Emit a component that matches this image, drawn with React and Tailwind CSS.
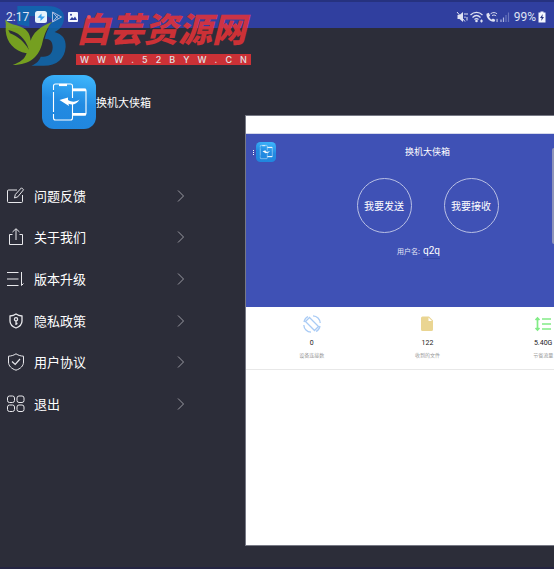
import React from 'react';

function PhonesIcon({ className }) {
  return (
    <svg viewBox="0 0 54 54" className={className} aria-hidden="true">
      <defs>
        <linearGradient id="tile" x1="0.6" y1="0" x2="0.4" y2="1">
          <stop offset="0" stopColor="#3cb4fb" />
          <stop offset="0.5" stopColor="#228be2" />
          <stop offset="1" stopColor="#2086de" />
        </linearGradient>
      </defs>
      <rect width="54" height="54" rx="12" fill="url(#tile)" />
      <g fill="none" stroke="#fff" strokeWidth="1.1">
        <path d="M11.500 15V11a2 2 0 0 1 2-2H28.500a2 2 0 0 1 2 2V23M11.500 17V37M11.500 39V43a2 2 0 0 0 2 2H28.500a2 2 0 0 0 2-2V29" />
        <path d="M30.500 14H42.500a1.500 1.500 0 0 1 1.500 1.500V38.500a1.500 1.500 0 0 1-1.500 1.500H30.500" />
        <path d="M31 15H44M31 39.300H44" strokeWidth="2.400" />
        <path d="M17 10H25" strokeWidth="2.200" />
      </g>
      <path d="M17.500 25L26 22.500V25C30 27.500 34 27 37.500 24.500C35 29 30.500 30.500 26.500 28.800L27 31Z" fill="#fff" />
    </svg>
  );
}

const stroke = { fill: 'none', stroke: 'currentColor', strokeWidth: 1 };

const icons = {
  feedback: (
    <g {...stroke}>
      <path d="M10 3H1.500a1 1 0 0 0-1 1V14.500a1 1 0 0 0 1 1H14.500a1 1 0 0 0 1-1V8" />
      <path d="M7.500 11L8.300 7.500L14.500 0.800L16.500 2.800L10.800 9.800Z" />
    </g>
  ),
  about: (
    <g {...stroke}>
      <path d="M5.500 6.500H2.500V16.500H15.500V6.500H12.500M9 12V1M5.500 4L9 0.700L12.500 4" />
    </g>
  ),
  upgrade: (
    <g {...stroke}>
      <path d="M0 2.500H11.500M0 9H11.500M0 15.500H11.500M14.500 2V15.500L16.500 13.500" />
    </g>
  ),
  privacy: (
    <g {...stroke} strokeWidth="1.300">
      <path d="M9 2C7 3.500 5 3.900 3 4V9C3 12.500 5.500 14.700 9 16C12.500 14.700 15 12.500 15 9V4C13 3.900 11 3.500 9 2Z" />
      <circle cx="9" cy="7.300" r="1.600" />
      <path d="M9 9V13M9 11.500H10.500" />
    </g>
  ),
  terms: (
    <g {...stroke}>
      <path d="M9 0.800C6.500 2.500 4 3 1.500 3.200V9C1.500 13 4.500 15.700 9 17.200C13.500 15.700 16.500 13 16.500 9V3.200C14 3 11.500 2.500 9 0.800Z" />
      <path d="M5 8.500L8.200 11.500L13 6" strokeWidth="1.200" />
    </g>
  ),
  exit: (
    <g {...stroke}>
      <rect x="0.500" y="1" width="7" height="6.500" rx="2" />
      <rect x="10" y="1" width="7" height="6.500" rx="2" />
      <rect x="0.500" y="10" width="7" height="6.500" rx="2" />
      <rect x="10" y="10" width="7" height="6.500" rx="2" />
    </g>
  ),
};

const menu = [
  ['feedback', '问题反馈'],
  ['about', '关于我们'],
  ['upgrade', '版本升级'],
  ['privacy', '隐私政策'],
  ['terms', '用户协议'],
  ['exit', '退出'],
];

function StatusBar() {
  return (
    <header className="h-7 shrink-0 border-t-2 border-[#26327f] bg-[#303f9f] pt-[5px] pr-2 pl-1.5 font-[Roboto,sans-serif] text-[12px] leading-5 text-[#dfe2f2]">
      <div className="relative z-10 flex items-center justify-between">
        <div className="flex items-center gap-1">
          <span className="mr-0.5">2:17</span>
          <svg viewBox="0 0 12 12" className="h-3 w-3">
            <rect width="12" height="12" rx="2.500" fill="#e6f2fb" />
            <path d="M2.500 6.500L6.500 2.500V5.500H10L5.500 10V7Z" fill="#3aa0ee" />
          </svg>
          <svg viewBox="0 0 12 12" className="h-3 w-3" fill="none" stroke="#a9bbe0">
            <path d="M1.500 1L10.500 6L1.500 11ZM1.500 1L7.500 8M1.500 11L7.500 4" />
          </svg>
          <svg viewBox="0 0 12 12" className="h-3 w-3">
            <rect x="1" y="1" width="10" height="10" rx="1" fill="#f4f7ff" />
            <path d="M2.500 9L5 6L6.500 7.500L8 5.500L10 9Z" fill="#303f9f" />
            <circle cx="4" cy="3.800" r="1" fill="#303f9f" />
          </svg>
          <span className="ml-1 h-1 w-1 rounded-full bg-[#e8505c]" />
        </div>
        <div className="flex items-center gap-0.5">
          <svg viewBox="0 0 12 12" className="h-3 w-3">
            <path d="M1.500 4H3.500L7 1V11L3.500 8H1.500Z" fill="currentColor" />
            <path d="M1 1L9 10.500M9 2V4M9 5.500V7M11 2V4M11 6V9.500" stroke="currentColor" fill="none" />
          </svg>
          <svg viewBox="0 0 14 12" className="h-3 w-3.5" fill="none" stroke="currentColor" strokeWidth="1.200">
            <path d="M0.500 4C4 0.500 9 0.500 12.500 4M2.500 6.500C5 4 8 4 10.500 6.500M4.500 8.500C6 7.200 7 7.200 8.500 8.500M10 10H13M11.500 8.500V11.500" />
            <circle cx="6.500" cy="10" r="0.700" />
          </svg>
          <svg viewBox="0 0 13 12" className="h-3 w-3">
            <path d="M0.500 2.500L3 1.500L4.500 4.500L3.300 5.700C4 7.300 5 8.200 6.300 8.800L7.500 7.500L10 9L9.500 11C5 12 0 7.500 0.500 2.500Z" fill="currentColor" />
            <path d="M5 2.500C7.500 0.500 10 1 12 2.500M6.500 4.500C8 3.500 9.500 3.700 11 4.800M12 8V11.500" fill="none" stroke="currentColor" />
          </svg>
          <svg viewBox="0 0 10 12" className="mr-0.5 h-3 w-2.5" fill="none" strokeWidth="1.200">
            <path d="M1 8.500V11M3.500 6.500V11" stroke="#aab2de" />
            <path d="M6 4V11M8.500 1.500V11" stroke="#6874bd" />
          </svg>
          <span>99%</span>
          <svg viewBox="0 0 8 12" className="h-3 w-2">
            <path d="M2.500 0.500H5.500V1.500H7.500V11.500H0.500V1.500H2.500Z" fill="#f4f7ff" />
            <path d="M4.800 3L2 7H3.700L3.200 10L6 6H4.300Z" fill="#26327f" />
          </svg>
        </div>
      </div>
    </header>
  );
}

function Sidebar() {
  return (
    <aside className="w-[245px] shrink-0 text-white">
      <div className="flex items-center pt-[47px] pl-[42px]">
        <PhonesIcon className="h-[54px] w-[54px]" />
        <h1 className="text-[11px] leading-4">换机大侠箱</h1>
      </div>
      <nav className="mt-[46px] mr-[60px] ml-[7px]">
        <ul className="grid h-[250px] grid-rows-6">
          {menu.map(([key, label]) => (
            <li key={key}>
              <button type="button" className="flex h-full w-full items-center text-left text-[13px] leading-5">
                <svg viewBox="0 0 18 18" className="mr-[9px] h-[18px] w-[18px] text-[#e8e8ec]">
                  {icons[key]}
                </svg>
                <span className="flex-1">{label}</span>
                <svg viewBox="0 0 8 12" className="h-3 w-2" fill="none" stroke="#9a9ba3">
                  <path d="M1 0.500L6.500 6L1 11.500" />
                </svg>
              </button>
            </li>
          ))}
        </ul>
      </nav>
    </aside>
  );
}

const stats = [
  [
    '0',
    '设备连接数',
    <g key="a" fill="none" stroke="#a9cbf5" strokeWidth="1.300">
      <path d="M6.500 2.500L15.500 11.500L11.500 15.500L2.500 6.500Z" />
      <path d="M10 0.800C14 1 17 4 17.200 8M8 17.200C4 17 1 14 0.800 10M1 7C1.500 4.500 3 2.500 5 1.500M17 11C16.500 13.500 15 15.500 13 16.500" />
    </g>,
  ],
  [
    '122',
    '收到的文件',
    <g key="b">
      <path d="M4.500 1.500H11L15 5.500V14.500A1.500 1.500 0 0 1 13.500 16H4.500A1.500 1.500 0 0 1 3 14.500V3A1.500 1.500 0 0 1 4.500 1.500Z" fill="#ead592" />
      <path d="M10.500 2.500V6H14Z" fill="#fff" />
    </g>,
  ],
  [
    '5.40G',
    '节省流量',
    <g key="c" fill="none" stroke="#82ec86" strokeWidth="1.700">
      <path d="M3.500 3V15M1.500 5L3.500 3L5.500 5M1.500 13L3.500 15L5.500 13M8 4H17M8 9H17M8 14H17" />
    </g>,
  ],
];

function Panel() {
  return (
    <main className="relative mt-[87px] h-[431px] min-w-0 flex-1 overflow-hidden border-y border-l border-[#777985] bg-white">
      <div className="w-[363px]">
        <div className="h-[18px] border-b border-[#d5d8ea]" />
        <section className="h-[173px] bg-[#3f51b5] pt-2 text-white">
          <div className="grid grid-cols-3 items-center">
            <div className="flex items-center pl-[7px]">
              <button type="button" aria-label="菜单" className="flex w-[3px] flex-col gap-px">
                <span className="h-px w-px bg-white" />
                <span className="h-px w-px bg-white" />
                <span className="h-px w-px bg-white" />
              </button>
              <PhonesIcon className="h-5 w-5" />
            </div>
            <h2 className="text-center text-[9px] leading-4">换机大侠箱</h2>
          </div>
          <div className="mt-4 flex justify-center gap-8">
            <button type="button" className="h-[55px] w-[55px] rounded-full border border-[#b9c0e4] text-[10px] whitespace-nowrap">
              我要发送
            </button>
            <button type="button" className="h-[55px] w-[55px] rounded-full border border-[#b9c0e4] text-[10px] whitespace-nowrap">
              我要接收
            </button>
          </div>
          <div className="mt-2.5 flex items-center pl-[151px]">
            <label htmlFor="user" className="text-[7px] leading-4 text-[#e3e6f5]">用户名:</label>
            <input
              id="user"
              defaultValue="q2q"
              className="ml-[3px] h-4 w-[17px] border-b border-[#3546a3] bg-transparent font-[Roboto,sans-serif] text-[10px] outline-none"
            />
          </div>
        </section>
        <section className="grid h-[63px] grid-cols-3 border-b border-[#e8e8e8] px-2 pt-2">
          {stats.map(([value, label, icon]) => (
            <div key={label} className="flex flex-col items-center">
              <svg viewBox="0 0 18 18" className="h-[18px] w-[18px]">{icon}</svg>
              <span className="mt-1 font-[Roboto,sans-serif] text-[7px] leading-3 text-[#222]">{value}</span>
              <span className="text-[5px] leading-3 text-[#999]">{label}</span>
            </div>
          ))}
        </section>
      </div>
      <div className="absolute top-8 right-0 h-24 w-0.5 rounded-l bg-[#8e94b8]" />
    </main>
  );
}

function Watermark() {
  return (
    <div className="pointer-events-none absolute top-1 left-1 flex gap-[9px] opacity-85">
      <svg viewBox="12 12 189 189" className="h-[63px] w-[63px]">
        <path
          d="M52 18H140C176 18 194 32 192 56C190 76 180 88 164 96C186 102 198 116 197 140C195 176 170 197 132 197H94C110 191 118 182 122 170H130C148 170 158 160 158 142C158 124 150 116 134 116C138 98 146 80 157 65C154 52 146 48 130 48H88V80L52 72Z"
          fill="#0f69b0"
        />
        <path
          d="M15 58C24 70 38 73 56 78C78 85 90 98 92 122C98 100 118 80 157 65C142 80 134 100 127 128C118 168 92 194 38 195C60 187 74 178 80 160C42 152 20 128 17 92C17 80 19 70 15 58Z"
          fill="#82b41c"
        />
        <path d="M25 90C52 96 76 112 87 150C72 124 54 110 30 100Z" fill="#2c2d39" />
      </svg>
      <div className="w-[175px] pt-[5px] text-[#e83236]">
        <p className="text-[34px] leading-[38px] font-black whitespace-nowrap italic">白芸资源网</p>
        <p className="mt-[7px] flex h-[11px] items-center justify-between bg-[#e83236] px-1 font-[Inter,sans-serif] text-[9px] leading-[11px] font-medium text-white">
          {'WWW.52BYW.CN'.split('').map((c, i) => (
            <span key={i}>{c}</span>
          ))}
        </p>
      </div>
    </div>
  );
}

export default function App() {
  return (
    <div className="relative flex min-h-screen flex-col overflow-hidden border-b-2 border-[#252542] bg-[#2c2d39] font-['Noto_Sans_CJK_SC',sans-serif]">
      <StatusBar />
      <div className="flex">
        <Sidebar />
        <Panel />
      </div>
      <Watermark />
    </div>
  );
}
